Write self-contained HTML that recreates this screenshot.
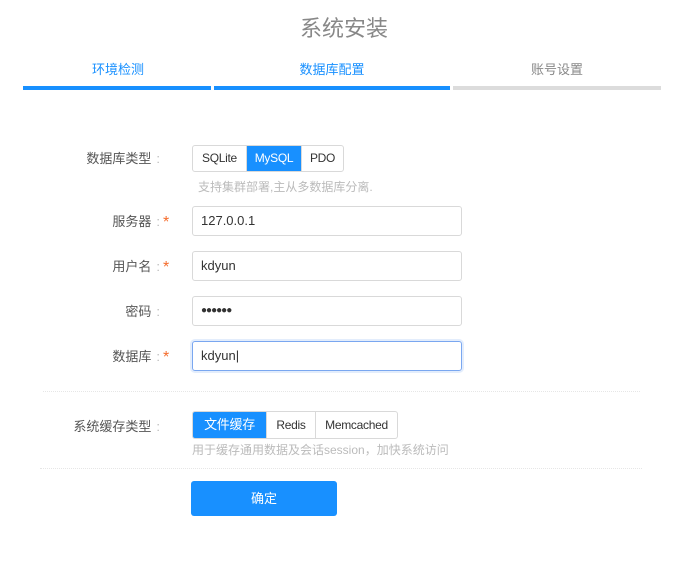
<!DOCTYPE html>
<html><head><meta charset="utf-8"><style>
*{margin:0;padding:0;box-sizing:border-box}
body{width:688px;height:563px;background:#fff;position:relative;overflow:hidden;font-family:"Liberation Sans","Noto Sans CJK SC",sans-serif;color:#555}
.a{position:absolute;white-space:nowrap}
.title{left:0;width:688px;text-align:center;top:11px;font-size:22px;color:#888}
.step{top:59px;font-size:13px;text-align:center}
.bar{top:86px;height:4px}
.lbl{font-size:13px;color:#555;text-align:right;width:160px;left:0}
.lbl i{font-style:normal;color:#bbb;margin-left:5px}
.lbl b{font-weight:normal;color:#f56c2c;position:absolute;left:163px;top:3px;font-size:16px}
.grp{display:flex;border:1px solid #d9d9d9;border-radius:3px;overflow:hidden;font-size:12px;color:#333}
.grp div{text-align:center;border-right:1px solid #d9d9d9;letter-spacing:-.3px}
.grp div:last-child{border-right:none}
.grp .on{background:#1890ff;color:#fff}
.hint{font-size:12px;color:#bbb}
.inp{left:192px;width:270px;height:30px;border:1px solid #d9d9d9;border-radius:3px;font-size:13px;color:#333;padding-left:8px;line-height:28px}
.hr{height:0;border-top:1px dotted #e6e6e6}
</style></head><body>
<div class="a title">系统安装</div>
<div class="a step" style="left:23px;width:190px;color:#1890ff">环境检测</div>
<div class="a step" style="left:214px;width:236px;color:#1890ff">数据库配置</div>
<div class="a step" style="left:453px;width:208px;color:#888">账号设置</div>
<div class="a bar" style="left:23px;width:188px;background:#1890ff"></div>
<div class="a bar" style="left:214px;width:236px;background:#1890ff"></div>
<div class="a bar" style="left:453px;width:208px;background:#dcdcdc"></div>

<div class="a lbl" style="top:148px">数据库类型<i>:</i></div>
<div class="a grp" style="left:192px;top:145px;height:27px;line-height:25px">
<div style="width:54px">SQLite</div><div class="on" style="width:55px">MySQL</div><div style="width:41px">PDO</div></div>
<div class="a hint" style="left:198px;top:178px">支持集群部署,主从多数据库分离.</div>

<div class="a lbl" style="top:211px">服务器<i>:</i><b>*</b></div>
<div class="a inp" style="top:206px">127.0.0.1</div>
<div class="a lbl" style="top:256px">用户名<i>:</i><b>*</b></div>
<div class="a inp" style="top:251px">kdyun</div>
<div class="a lbl" style="top:301px">密码<i>:</i></div>
<div class="a inp" style="top:296px;letter-spacing:-1px;font-size:10px">●●●●●●</div>
<div class="a lbl" style="top:346px">数据库<i>:</i><b>*</b></div>
<div class="a inp" style="top:341px;border-color:#7aa7f0;box-shadow:0 0 0 2px #e3edfc">kdyun|</div>

<div class="a hr" style="left:43px;width:597px;top:391px"></div>
<div class="a lbl" style="top:416px">系统缓存类型<i>:</i></div>
<div class="a grp" style="left:192px;top:411px;height:28px;line-height:26px">
<div class="on" style="width:74px;font-size:13px">文件缓存</div><div style="width:49px">Redis</div><div style="width:81px">Memcached</div></div>
<div class="a hint" style="left:192px;top:441px">用于缓存通用数据及会话session，加快系统访问</div>
<div class="a hr" style="left:40px;width:602px;top:468px"></div>

<div class="a" style="left:191px;top:481px;width:146px;height:35px;background:#1890ff;border-radius:3px;color:#fff;font-size:13px;text-align:center;line-height:35px">确定</div>
</body></html>
